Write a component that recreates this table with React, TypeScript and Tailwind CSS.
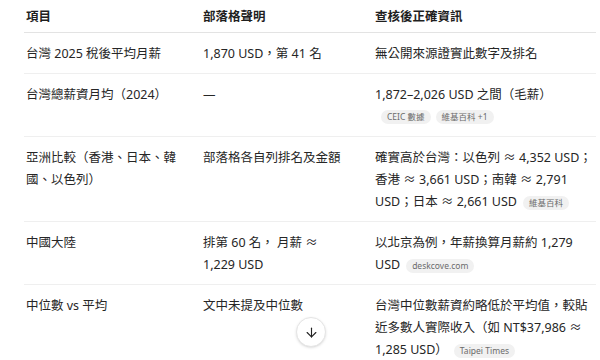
import { ArrowDown } from 'lucide-react';

type Cell = { text: string; chips?: string[]; chipsBelow?: boolean };

const rows: { item: string; blog: string; fact: Cell }[] = [
  { item: '台灣 2025 稅後平均月薪', blog: '1,870 USD，第 41 名', fact: { text: '無公開來源證實此數字及排名' } },
  {
    item: '台灣總薪資月均（2024）',
    blog: '—',
    fact: { text: '1,872–2,026 USD 之間（毛薪）', chips: ['CEIC 數據', '維基百科 +1'], chipsBelow: true },
  },
  {
    item: '亞洲比較（香港、日本、韓國、以色列）',
    blog: '部落格各自列排名及金額',
    fact: { text: '確實高於台灣：以色列 ≈ 4,352 USD；香港 ≈ 3,661 USD；南韓 ≈ 2,791 USD；日本 ≈ 2,661 USD', chips: ['維基百科'] },
  },
  {
    item: '中國大陸',
    blog: '排第 60 名， 月薪 ≈ 1,229 USD',
    fact: { text: '以北京為例，年薪換算月薪約 1,279 USD', chips: ['deskcove.com'] },
  },
  {
    item: '中位數 vs 平均',
    blog: '文中未提及中位數',
    fact: { text: '台灣中位數薪資約略低於平均值，較貼近多數人實際收入（如 NT$37,986 ≈ 1,285 USD）', chips: ['Taipei Times'] },
  },
];

function Chip({ label }: { label: string }) {
  return (
    <span className="inline-block h-[14px] rounded-full bg-[#f1f1f1] px-[6px] align-middle text-[8.5px] leading-[14px] text-[#6b6b6b]">
      {label}
    </span>
  );
}

export default function App() {
  return (
    <div
      className="relative h-[360px] w-[600px] overflow-hidden bg-white pl-[24px] pr-[4px] text-[12.5px] leading-[22px] text-[#262626]"
      style={{ fontFamily: '"Noto Sans", "Noto Sans CJK TC", sans-serif' }}
    >
      <div className="grid grid-cols-[179px_172px_1fr]">
        <div className="border-b border-[#e3e3e3] pb-[4px] pl-[2px] pt-[6px] font-semibold text-[#1f1f1f]">項目</div>
        <div className="border-b border-[#e3e3e3] pb-[4px] pt-[6px] font-semibold text-[#1f1f1f]">部落格聲明</div>
        <div className="border-b border-[#e3e3e3] pb-[4px] pt-[6px] font-semibold text-[#1f1f1f]">查核後正確資訊</div>

        {rows.map((row, i) => {
          const last = i === rows.length - 1;
          const border = last ? '' : 'border-b border-[#efefef]';
          return (
            <div key={row.item} className="contents">
              <div className={`${border} pb-[8px] pl-[2px] pr-[22px] pt-[10px]`}>{row.item}</div>
              <div className={`${border} pb-[8px] pr-[30px] pt-[10px]`}>{row.blog}</div>
              <div className={`${border} pb-[8px] pt-[10px]`}>
                {row.fact.chipsBelow ? (
                  <>
                    <div>{row.fact.text}</div>
                    <div className="flex h-[22px] items-center gap-[5px] pl-[6px]">
                      {row.fact.chips?.map((c) => (
                        <Chip key={c} label={c} />
                      ))}
                    </div>
                  </>
                ) : (
                  <>
                    {row.fact.text}
                    {row.fact.chips?.map((c) => (
                      <span key={c} className="ml-[6px]">
                        <Chip label={c} />
                      </span>
                    ))}
                  </>
                )}
              </div>
            </div>
          );
        })}
      </div>

      <button className="absolute left-[296px] top-[317px] flex h-[30px] w-[30px] items-center justify-center rounded-full border border-[#e5e5e5] bg-white shadow-sm">
        <ArrowDown size={15} strokeWidth={1.8} className="text-[#222]" />
      </button>
    </div>
  );
}
